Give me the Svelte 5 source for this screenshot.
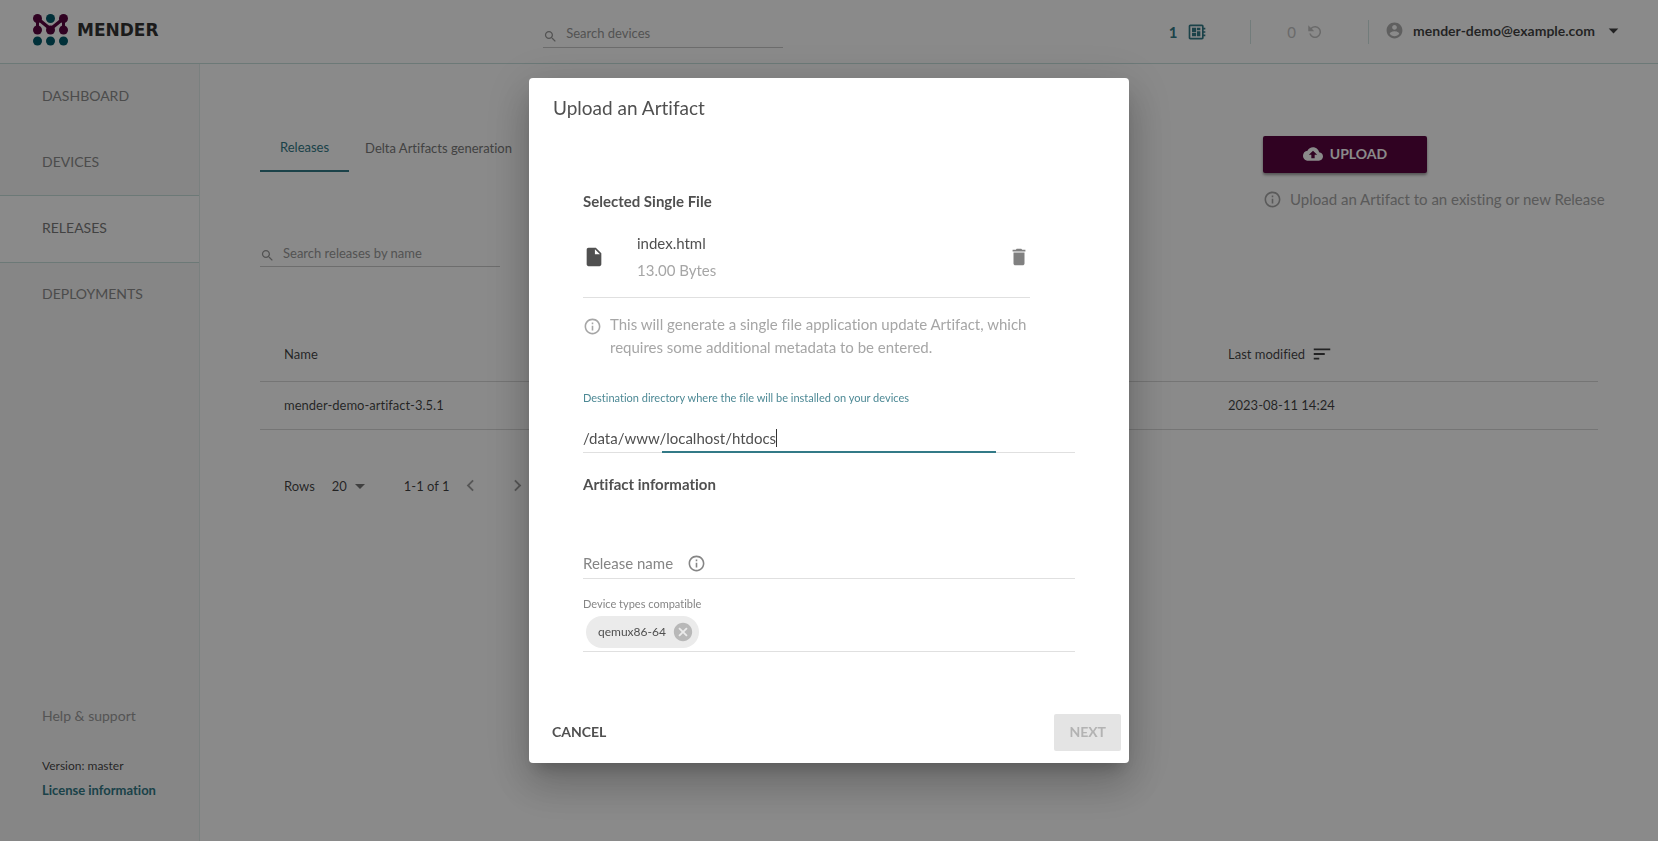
<script>
  const paths = {
    search: 'M15.5 14h-.79l-.28-.27C15.41 12.59 16 11.11 16 9.5 16 5.91 13.09 3 9.5 3S3 5.91 3 9.5 5.91 16 9.5 16c1.61 0 3.09-.59 4.23-1.57l.27.28v.79l5 4.99L20.49 19l-4.99-5zm-6 0C7.01 14 5 11.99 5 9.5S7.01 5 9.5 5 14 7.01 14 9.5 11.99 14 9.5 14z',
    board: 'M22 9V7h-2V5c0-1.1-.9-2-2-2H4c-1.1 0-2 .9-2 2v14c0 1.1.9 2 2 2h14c1.1 0 2-.9 2-2v-2h2v-2h-2v-2h2v-2h-2V9h2zm-4 10H4V5h14v14zM6 13h5v4H6zm6-6h4v3h-4zM6 7h5v5H6zm6 4h4v6h-4z',
    replay: 'M6.35 6.35A8 8 0 1 1 4.27 14h2.08A6 6 0 1 0 7.76 7.76L11 11H3V3z',
    account: 'M12 2C6.48 2 2 6.48 2 12s4.48 10 10 10 10-4.48 10-10S17.52 2 12 2zm0 3c1.66 0 3 1.34 3 3s-1.34 3-3 3-3-1.34-3-3 1.34-3 3-3zm0 14.2c-2.5 0-4.71-1.28-6-3.22.03-1.99 4-3.08 6-3.08 1.99 0 5.97 1.09 6 3.08-1.29 1.94-3.5 3.22-6 3.22z',
    down: 'M7 10l5 5 5-5z',
    cloud: 'M19.35 10.04C18.67 6.59 15.64 4 12 4 9.11 4 6.6 5.64 5.35 8.04 2.34 8.36 0 10.91 0 14c0 3.31 2.69 6 6 6h13c2.76 0 5-2.24 5-5 0-2.64-2.05-4.78-4.65-4.96zM14 13v4h-4v-4H7l5-5 5 5h-3z',
    info: 'M11 7h2v2h-2zm0 4h2v6h-2zm1-9C6.48 2 2 6.48 2 12s4.48 10 10 10 10-4.48 10-10S17.52 2 12 2zm0 18c-4.41 0-8-3.59-8-8s3.59-8 8-8 8 3.59 8 8-3.59 8-8 8z',
    sort: 'M3 18h6v-2H3v2zM3 6v2h18V6H3zm0 7h12v-2H3v2z',
    left: 'M15.41 7.41L14 6l-6 6 6 6 1.41-1.41L10.83 12z',
    right: 'M10 6L8.59 7.41 13.17 12l-4.58 4.59L10 18l6-6z',
    file: 'M6 2c-1.1 0-1.99.9-1.99 2L4 20c0 1.1.89 2 1.99 2H18c1.1 0 2-.9 2-2V8l-6-6H6zm7 7V3.5L18.5 9H13z',
    trash: 'M6 19c0 1.1.9 2 2 2h8c1.1 0 2-.9 2-2V7H6v12zM19 4h-3.5l-1-1h-5l-1 1H5v2h14V4z',
    cancel: 'M12 2C6.47 2 2 6.47 2 12s4.47 10 10 10 10-4.47 10-10S17.53 2 12 2zm5 13.59L15.59 17 12 13.41 8.41 17 7 15.59 10.59 12 7 8.41 8.41 7 12 10.59 15.59 7 17 8.41 13.41 12 17 15.59z'
  };
  const nav = ['DASHBOARD', 'DEVICES', 'RELEASES', 'DEPLOYMENTS'];
  let active = $state('RELEASES');
  let destination = $state('/data/www/localhost/htdocs');
  let releaseName = $state('');
</script>

{#snippet icon(name, size)}
  <svg class="icon" viewBox="0 0 24 24" width={size} height={size} aria-hidden="true"><path d={paths[name]} /></svg>
{/snippet}

<div class="app">
  <header>
    <a class="brand" href="#home">
      <svg width="35" height="32" viewBox="0 0 35 32" aria-hidden="true">
        <g fill="#5a0540">
          <path d="M4.500 4.500L17.500 15L30.500 4.500" fill="none" stroke="#5a0540" stroke-width="3.500" />
          <path d="M4.500 4.500V16M30.500 4.500V16" fill="none" stroke="#5a0540" stroke-width="3" />
          <circle cx="4.500" cy="4.500" r="4.500" /><circle cx="30.500" cy="4.500" r="4.500" />
          <circle cx="4.500" cy="16" r="4.500" /><circle cx="17.500" cy="16" r="4.500" /><circle cx="30.500" cy="16" r="4.500" />
        </g>
        <g fill="#015969">
          <circle cx="17.500" cy="4.500" r="4.500" />
          <circle cx="4.500" cy="27" r="4.500" /><circle cx="17.500" cy="27" r="4.500" /><circle cx="30.500" cy="27" r="4.500" />
        </g>
      </svg>
      <span>MENDER</span>
    </a>
    <label class="search top-search">
      {@render icon('search', 15)}
      <input type="text" placeholder="Search devices" aria-label="Search devices" />
    </label>
    <div class="status">
      <a class="devices" href="#devices">1 {@render icon('board', 20)}</a>
      <a class="deployments" href="#deployments">0 {@render icon('replay', 18)}</a>
      <button class="account">
        {@render icon('account', 19)}<span>mender-demo@example.com</span>{@render icon('down', 23)}
      </button>
    </div>
  </header>

  <div class="body">
    <nav>
      {#each nav as item}
        <a class="item" class:active={active === item} href="#{item.toLowerCase()}" onclick={() => (active = item)}>{item}</a>
      {/each}
      <div class="foot">
        <a class="help" href="#help">Help &amp; support</a>
        <span class="version">Version: master</span>
        <a class="license" href="#license">License information</a>
      </div>
    </nav>

    <main>
      <div class="intro">
        <div class="filters">
          <div class="tabs">
            <button class="tab selected">Releases</button>
            <button class="tab">Delta Artifacts generation</button>
          </div>
          <label class="search">
            {@render icon('search', 15)}
            <input type="text" placeholder="Search releases by name" aria-label="Search releases by name" />
          </label>
        </div>
        <div class="upload-area">
          <button class="upload">{@render icon('cloud', 20)}UPLOAD</button>
          <p>{@render icon('info', 19)}Upload an Artifact to an existing or new Release</p>
        </div>
      </div>

      <table>
        <thead>
          <tr><th>Name</th><th class="modified"><span>Last modified {@render icon('sort', 22)}</span></th></tr>
        </thead>
        <tbody>
          <tr><td>mender-demo-artifact-3.5.1</td><td>2023-08-11 14:24</td></tr>
        </tbody>
      </table>

      <div class="pages">
        <label for="rows">Rows</label>
        <div class="rows">
          <select id="rows"><option>20</option><option>50</option></select>
          {@render icon('down', 24)}
        </div>
        <span class="range">1-1 of 1</span>
        <button aria-label="Previous page">{@render icon('left', 23)}</button>
        <button aria-label="Next page">{@render icon('right', 23)}</button>
      </div>
    </main>
  </div>
</div>

<div class="backdrop">
  <div class="dialog" role="dialog" aria-modal="true" aria-labelledby="dialog-title">
    <h2 id="dialog-title">Upload an Artifact</h2>
    <div class="content">
      <h4>Selected Single File</h4>
      <div class="file">
        {@render icon('file', 22)}
        <div class="details"><span>index.html</span><span class="size">13.00 Bytes</span></div>
        <button aria-label="Remove file">{@render icon('trash', 22)}</button>
      </div>
      <p class="note">{@render icon('info', 19)}<span>This will generate a single file application update Artifact, which requires some additional metadata to be entered.</span></p>

      <label class="small focused" for="destination">Destination directory where the file will be installed on your devices</label>
      <div class="field destination">
        <input id="destination" type="text" bind:value={destination} /><span class="caret"></span>
      </div>

      <h4>Artifact information</h4>
      <div class="field release">
        <input id="release" type="text" placeholder="Release name" aria-label="Release name" bind:value={releaseName} />
        {@render icon('info', 19)}
      </div>

      <label class="small" for="types">Device types compatible</label>
      <div class="field types">
        <span class="chip">qemux86-64<button aria-label="Remove qemux86-64">{@render icon('cancel', 22)}</button></span>
        <input id="types" type="text" />
      </div>
    </div>
    <div class="actions">
      <button class="cancel">CANCEL</button>
      <button class="next" disabled>NEXT</button>
    </div>
  </div>
</div>

<style>
  :global(body) { background: #fff; }
  * { box-sizing: border-box; }
  .app, .backdrop { font-family: Lato, sans-serif; font-size: 15px; line-height: 22px; color: rgba(10, 10, 11, 0.78); font-variant-ligatures: none; }
  .app { display: flex; flex-direction: column; min-height: 100vh; }
  button, input, select { font: inherit; font-variant-ligatures: none; color: inherit; background: none; border: 0; padding: 0; margin: 0; outline: 0; }
  button { display: inline-flex; align-items: center; cursor: pointer; }
  a { color: inherit; text-decoration: none; }
  h2, h4, p { margin: 0; }
  .icon { display: block; flex: none; fill: currentColor; }

  header { display: grid; grid-template-columns: 20fr 240px 33fr; align-items: center; height: 64px; border-bottom: 1px solid #c7e0dd; padding: 0 33px; }
  .brand { display: flex; align-items: center; gap: 9px; padding-bottom: 4px; }
  .brand span { font-family: "DejaVu Sans", sans-serif; font-weight: 700; font-size: 17px; color: #333; }
  .search { display: flex; align-items: center; gap: 8px; width: 240px; height: 28px; border-bottom: 1px solid #c9c9c9; font-size: 13px; color: #999; }
  .search .icon { margin: 6px 0 0; }
  .search input { flex: 1; min-width: 0; }
  input::placeholder { color: inherit; opacity: 1; }
  .top-search { margin-top: 4px; }
  .status { display: flex; justify-content: flex-end; align-items: center; height: 24px; }
  .status a { display: flex; align-items: center; gap: 10px; height: 24px; border-right: 1px solid #d3e6e4; }
  .devices { color: #337a87; font-weight: 700; padding-right: 43px; }
  .deployments { color: #c4c4c4; padding: 0 44px 0 36px; }
  .account { padding: 0 0 2px 16px; font-size: 14px; font-weight: 700; }
  .account span { margin: 0 7px 0 9px; }
  .account .icon:first-child { color: #b0b0b0; }

  .body { display: flex; flex: 1; }
  nav { display: flex; flex-direction: column; width: 200px; background: #f7f7f7; border-right: 1px solid #e2eceb; font-size: 14px; }
  .item { display: flex; align-items: center; height: 66px; padding: 0 0 2px 42px; border-block: 1px solid transparent; color: #8c8c8c; }
  .item.active { height: 68px; margin: -1px 0; background: #fff; border-color: #c7e0dd; color: #7a7a7a; }
  .foot { display: flex; flex-direction: column; margin-top: auto; padding: 0 0 40px 42px; }
  .help { color: #9c9c9c; margin-bottom: 28px; }
  .version { font-size: 12px; margin-bottom: 2px; }
  .license { font-size: 13px; font-weight: 700; color: #337a87; }

  main { flex: 1; padding: 60px 60px 0; font-size: 13px; }
  .intro { display: flex; justify-content: space-between; align-items: flex-start; }
  .tabs { display: flex; margin-bottom: 67px; }
  .tab { height: 48px; padding: 0 16px; color: #7a7a7a; }
  .tab.selected { padding: 0 20px; color: #337a87; border-bottom: 2px solid #337a87; }
  .upload-area { width: 335px; margin-top: 12px; white-space: nowrap; }
  .upload { justify-content: center; gap: 7px; width: 164px; height: 37px; padding-bottom: 2px; border-radius: 2px; background: #5a0540; color: #fff; font-size: 14px; font-weight: 700; box-shadow: 0 2px 3px rgba(0, 0, 0, 0.4); }
  .upload-area p { display: flex; align-items: center; gap: 8px; margin-top: 15px; font-size: 15px; color: #a6a6a6; }

  table { width: 100%; margin-top: 60px; border-collapse: collapse; table-layout: fixed; }
  th, td { height: 48px; padding: 0 0 0 24px; text-align: left; font-weight: 400; border-bottom: 1px solid #d8d8d8; }
  th { height: 54px; }
  .modified { width: 394px; }
  .modified span { display: flex; align-items: center; gap: 6px; }
  .pages { display: flex; align-items: center; margin-top: 44px; padding-left: 24px; }
  .rows { display: flex; align-items: center; margin: 0 32px 0 17px; }
  .rows select { appearance: none; }
  .rows .icon { color: #777; }
  .range { margin-right: 10px; }
  .pages button { color: #a0a0a0; margin-right: 24px; }

  .backdrop { position: fixed; inset: 0; display: flex; align-items: center; justify-content: center; background: rgba(0, 0, 0, 0.46); color: #505050; }
  .dialog { width: 600px; max-width: 100%; background: #fff; border-radius: 4px; box-shadow: 0 11px 15px -7px rgba(0, 0, 0, 0.2), 0 24px 38px 3px rgba(0, 0, 0, 0.14), 0 9px 46px 8px rgba(0, 0, 0, 0.12); }
  h2 { padding: 16px 24px; font-size: 19px; line-height: 28px; font-weight: 400; }
  .content { padding: 52px 54px 62px; }
  h4 { font-size: 15px; font-weight: 700; }
  .file { display: flex; align-items: center; width: 447px; max-width: 100%; padding: 20px 0 16px; border-bottom: 1px solid #e0e0e0; }
  .details { display: flex; flex-direction: column; gap: 5px; flex: 1; margin-left: 32px; }
  .size { color: #a6a6a6; }
  .file button { color: #808080; }
  .note { display: flex; gap: 8px; width: 456px; max-width: 100%; margin: 15px 0 31px; line-height: 23px; color: #a6a6a6; }
  .note .icon { margin-top: 4px; }
  .small { display: block; font-size: 11px; line-height: 16px; color: #858585; }
  .small.focused { color: #4d8995; }
  .field { display: flex; align-items: center; border-bottom: 1px solid #e0e0e0; }
  .field input { field-sizing: content; line-height: 24px; height: 24px; }
  .destination { position: relative; margin: 20px 0; padding-bottom: 2px; }
  .destination input { caret-color: transparent; }
  .destination::after { content: ""; position: absolute; left: 16%; right: 16%; bottom: -1px; height: 2px; background: #337a87; }
  .caret { width: 1px; height: 18px; background: #333; }
  .release { gap: 14px; margin: 56px 0 17px; padding-bottom: 3px; color: #858585; }
  .types { margin-top: 4px; padding-bottom: 3px; }
  .chip { display: flex; align-items: center; gap: 6px; height: 32px; margin-left: 3px; padding: 0 5px 0 12px; border-radius: 16px; background: #ebebeb; font-size: 12px; }
  .chip button { color: #b8b8b8; }
  .types input { flex: 1; min-width: 0; }
  .actions { display: flex; justify-content: space-between; padding: 0 8px 12px; }
  .actions button { height: 37px; padding: 0 15px 2px; border-radius: 2px; font-size: 14px; font-weight: 700; }
  .actions .next { background: #e4e4e4; color: #b3b3b3; }
</style>
